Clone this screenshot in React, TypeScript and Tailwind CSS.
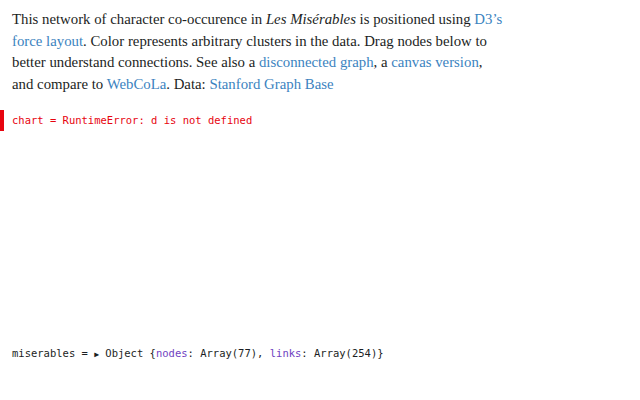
import React from "react";

const serif = "font-['Liberation_Serif',serif]";
const mono = "font-['DejaVu_Sans_Mono',monospace]";

function A({ children }: { children: React.ReactNode }) {
  return <a className="text-[#3b83c0]">{children}</a>;
}

export default function App() {
  return (
    <div className="w-[640px] h-[400px] bg-white overflow-hidden">
      {/* intro text, wrapped as in the notebook */}
      <p
        className={`${serif} text-[14.8px] leading-[21.5px] text-[#1b1e23] pl-3 pt-[9px] w-[600px]`}
      >
        This network of character co-occurence in <i>Les Misérables</i> is
        positioned using <A>D3’s</A>
        <br />
        <A>force layout</A>. Color represents arbitrary clusters in the data.
        Drag nodes below to
        <br />
        better understand connections. See also a <A>disconnected graph</A>, a{" "}
        <A>canvas version</A>,
        <br />
        and compare to <A>WebCoLa</A>. Data: <A>Stanford Graph Base</A>
      </p>

      {/* error cell */}
      <div className="mt-[15px] flex items-stretch h-[21px]">
        <div className="w-1 bg-[#e7040f]" />
        <div
          className={`${mono} text-[10.5px] leading-[21px] text-[#e7040f] pl-2`}
        >
          chart = RuntimeError: d is not defined
        </div>
      </div>

      <div className="h-[212px]" />

      {/* data cell */}
      <div className={`${mono} text-[10.5px] leading-[21px] text-[#1b1e23] pl-3`}>
        miserables = <span className="text-[8px]">▶</span> Object{" "}
        {"{"}
        <span className="text-[#6f42c1]">nodes</span>: Array(77),{" "}
        <span className="text-[#6f42c1]">links</span>: Array(254){"}"}
      </div>
    </div>
  );
}
